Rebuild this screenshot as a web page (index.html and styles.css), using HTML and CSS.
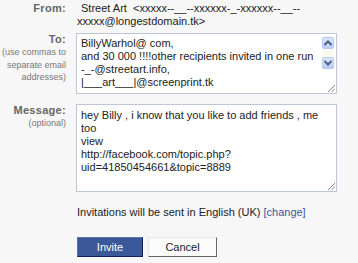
FILE: index.html
```html
<!DOCTYPE html>
<html lang="en">
<head>
  <meta charset="UTF-8">
  <title>Invite friends</title>
  <link rel="stylesheet" href="styles.css">
</head>
<body>
  <div class="form">
    <!-- From -->
    <div class="row from-row">
      <div class="label"><b>From:</b></div>
      <div class="from">Street Art&nbsp; &lt;xxxxx--__--xxxxxx-_-xxxxxx--__--<br>xxxxx@longestdomain.tk&gt;</div>
    </div>

    <!-- To -->
    <div class="row to-row">
      <div class="label">
        <b>To:</b>
        <small>(use commas to<br>separate email<br>addresses)</small>
      </div>
      <div class="box to">
        <div class="box-text">BillyWarhol@ com,<br>and 30 000 !!!!other recipients invited in one run<br>-_-@streetart.info,<br>|___art___|@screenprint.tk</div>
        <div class="scroll">
          <span class="arrow"><svg width="8" height="6" viewBox="0 0 8 6"><path d="M0.5 5 L4 1.5 L7.5 5" fill="none" stroke="#4d6185" stroke-width="2"/></svg></span>
          <span class="track"></span>
          <span class="arrow"><svg width="8" height="6" viewBox="0 0 8 6"><path d="M0.5 1 L4 4.5 L7.5 1" fill="none" stroke="#4d6185" stroke-width="2"/></svg></span>
          <span class="grip"><svg width="7" height="7" viewBox="0 0 7 7"><path d="M7 0 L0 7 M7 3.5 L3.5 7" stroke="#888" stroke-width="1"/></svg></span>
        </div>
      </div>
    </div>

    <!-- Message -->
    <div class="row msg-row">
      <div class="label">
        <b>Message:</b>
        <small>(optional)</small>
      </div>
      <div class="box message">
        <div class="box-text">hey Billy , i know that you like to add friends , me<br>too<br>view<br>http://facebook.com/topic.php?<br>uid=41850454661&amp;topic=8889</div>
        <div class="scroll">
          <span class="grip"><svg width="7" height="7" viewBox="0 0 7 7"><path d="M7 0 L0 7 M7 3.5 L3.5 7" stroke="#888" stroke-width="1"/></svg></span>
        </div>
      </div>
    </div>

    <p class="lang">Invitations will be sent in English (UK) <a href="#">[change]</a></p>

    <div class="buttons">
      <button class="btn invite">Invite</button>
      <button class="btn cancel">Cancel</button>
    </div>
  </div>
</body>
</html>
```

FILE: styles.css
```css
body {
  margin: 0;
  background-color: #f7f7f7;
  font-family: "Liberation Sans", Arial, sans-serif;
  font-size: 11px;
  color: #222;
}

.form {
  padding-top: 2px;
}

.row {
  display: flex;
  gap: 10px;
}

.label {
  width: 66px;
  text-align: right;
  line-height: 13px;
}

.label b {
  display: block;
  color: #666;
  letter-spacing: 0.3px;
}

.label small {
  display: block;
  font-size: 9px;
  line-height: 12.5px;
  color: #777;
}

.from {
  line-height: 13px;
  padding-left: 1px;
  text-indent: 4px;
}

.to-row {
  margin-top: 5px;
}

.msg-row {
  margin-top: 10px;
}

/* Fake textareas */
.box {
  width: 261px;
  box-sizing: border-box;
  border: 1px solid #bdc7d8;
  background-color: #fff;
  display: flex;
}

.to {
  height: 61px;
}

.message {
  height: 88px;
}

.box-text {
  flex: 1;
  padding: 3px 4px;
  line-height: 13px;
  white-space: nowrap;
  overflow: hidden;
}

.message .box-text {
  padding-top: 4px;
}

.scroll {
  width: 15px;
  display: flex;
  flex-direction: column;
  align-items: center;
  padding: 3px 1px 1px 0;
}

.arrow {
  width: 12px;
  height: 12px;
  box-sizing: border-box;
  border: 1px solid #b7c8f2;
  border-radius: 2px;
  background: linear-gradient(#dbe6fd, #bccdf7);
  display: flex;
  justify-content: center;
  align-items: center;
}

.track {
  width: 12px;
  height: 8px;
  background-color: #f9f9f1;
}

.grip {
  margin-top: auto;
  align-self: flex-end;
  display: flex;
}

.lang {
  margin: 14px 0 0 77px;
  line-height: 13px;
}

.lang a {
  color: #3b5998;
  text-decoration: none;
}

.buttons {
  display: flex;
  gap: 5px;
  margin: 18px 0 0 77px;
}

.btn {
  height: 20px;
  font-family: "Liberation Sans", Arial, sans-serif;
  font-size: 11px;
  padding: 0;
  cursor: pointer;
}

.invite {
  width: 66px;
  background-color: #3b5998;
  color: #fff;
  border: 1px solid;
  border-color: #5b74a8 #0e1f5b #0e1f5b #5b74a8;
}

.cancel {
  width: 69px;
  background-color: #fbfbfb;
  color: #222;
  border: 1px solid;
  border-color: #e7e7e7 #666 #666 #e7e7e7;
}
```
